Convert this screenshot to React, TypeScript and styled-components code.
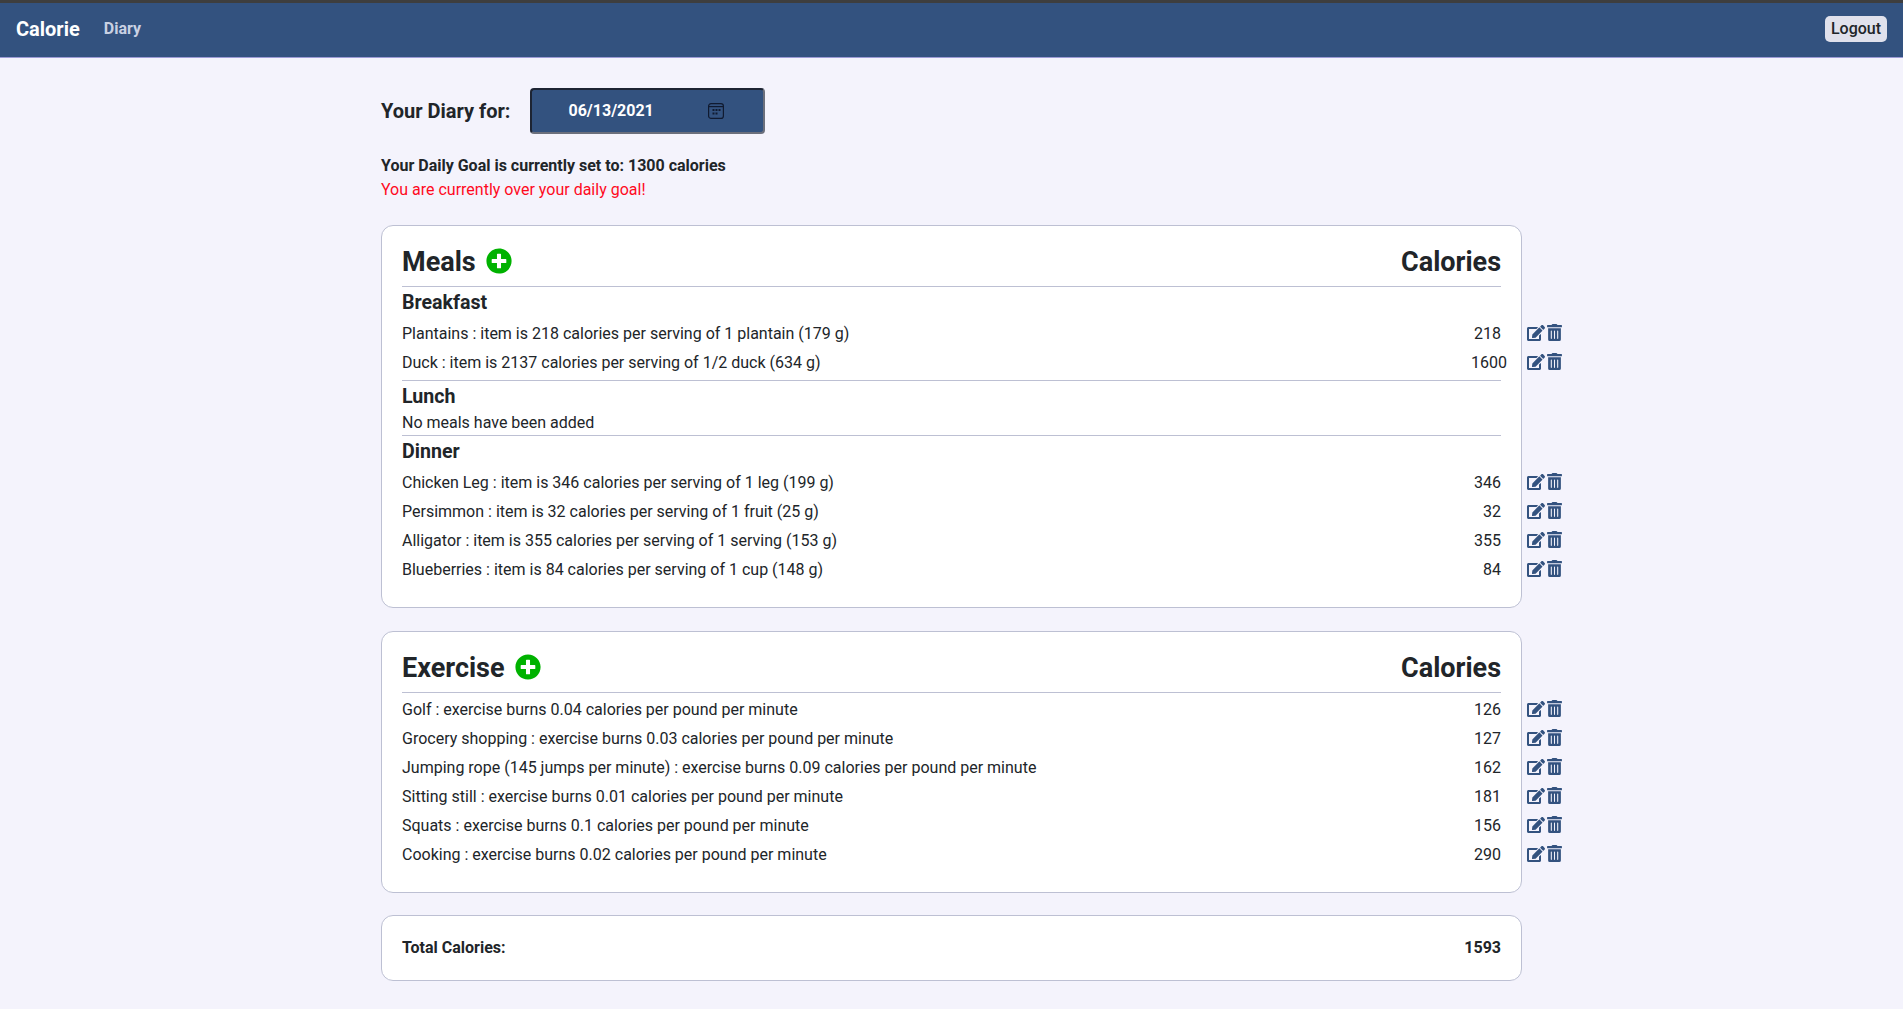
import React from 'react'
import styled, { createGlobalStyle } from 'styled-components'
import { FaPlusCircle, FaEdit, FaTrashAlt } from 'react-icons/fa'

const GlobalStyle = createGlobalStyle`
  * {
    box-sizing: border-box;
  }
  body {
    margin: 0;
    background: #f4f3fc;
    color: #212529;
    font-family: Roboto, "Liberation Sans", sans-serif;
    font-size: 16px;
    line-height: 24px;
  }
`

const Navbar = styled.nav`
  display: flex;
  align-items: center;
  height: 58px;
  padding: 0 16px 3px 16px;
  background: #33527f;
  border-top: 3px solid #3e3e3e;
  border-bottom: 1px solid #9c9bd6;
`

const Brand = styled.span`
  color: #fff;
  font-size: 20px;
  font-weight: 700;
  margin-right: 24px;
`

const NavLink = styled.span`
  color: #c9d1e3;
  font-size: 16px;
  font-weight: 700;
`

const LogoutButton = styled.button`
  margin-left: auto;
  height: 26px;
  padding: 0 6px;
  border: none;
  border-radius: 5px;
  background: #e0e1ec;
  color: #212529;
  font-family: inherit;
  font-size: 16px;
  font-weight: 500;
`

const Main = styled.main`
  width: 1141px;
  margin-left: 381px;
  padding-bottom: 29px;
`

const DiaryHeader = styled.div`
  display: flex;
  align-items: center;
  gap: 20px;
  margin: 30px 0 20px;
`

const DiaryLabel = styled.span`
  font-size: 20px;
  font-weight: 700;
`

const DatePicker = styled.div`
  display: flex;
  align-items: center;
  justify-content: space-between;
  width: 235px;
  height: 46px;
  padding: 0 39px 0 36px;
  background: #33527f;
  border: 2px solid;
  border-color: #1d2433 #6b6f7c #6b6f7c #1d2433;
  border-radius: 4px;
  color: #fff;
  font-weight: 700;
`

const GoalText = styled.div`
  font-weight: 700;
`

const OverText = styled.div`
  color: #ff0a1e;
`

const Card = styled.section`
  position: relative;
  margin-top: 23px;
  padding: 16px 20px 23px;
  background: #fff;
  border: 1px solid #bdc0d3;
  border-radius: 12px;
`

const CardHeader = styled.div`
  display: flex;
  align-items: center;
  justify-content: space-between;
  height: 45px;
  border-bottom: 1px solid #bdc0d3;
  padding-top: 2px;
  padding-bottom: 6px;
`

const CardTitle = styled.h2`
  display: flex;
  align-items: center;
  gap: 10px;
  margin: 0;
  font-size: 27px;
  font-weight: 700;
  line-height: 36px;
`

const AddIcon = styled(FaPlusCircle)`
  color: #00b200;
  font-size: 26px;
  margin-top: -2px;
`

const ColumnTitle = styled.span`
  font-size: 27px;
  font-weight: 700;
  line-height: 36px;
`

const Group = styled.div<{ $gap?: number }>`
  padding-bottom: ${(p) => p.$gap ?? 0}px;
  border-bottom: ${(p) => (p.$gap ? '1px solid #bdc0d3' : 'none')};
`

const GroupTitle = styled.h3`
  margin: 0;
  font-size: 19.6px;
  font-weight: 700;
  line-height: 31px;
`

const Rows = styled.div<{ $pad?: number }>`
  padding-top: ${(p) => p.$pad ?? 0}px;
`

const Row = styled.div`
  position: relative;
  display: flex;
  justify-content: space-between;
  height: 29px;
  line-height: 29px;
`

const Amount = styled.span<{ $wide?: boolean }>`
  margin-right: ${(p) => (p.$wide ? '-6px' : '0')};
`

const Actions = styled.div`
  position: absolute;
  top: -1px;
  left: 1125px;
  display: flex;
  align-items: center;
  gap: 1px;
  height: 29px;
  color: #33527f;
  font-size: 18px;
  & > svg:last-child {
    font-size: 17px;
  }
`

const EmptyText = styled.div`
  height: 21px;
  line-height: 22px;
`

const TotalCard = styled(Card)`
  display: flex;
  align-items: center;
  justify-content: space-between;
  height: 66px;
  margin-top: 22px;
  padding: 0 20px;
  font-size: 16px;
  font-weight: 700;
`

const breakfast = [
  ['Plantains : item is 218 calories per serving of 1 plantain (179 g)', '218'],
  ['Duck : item is 2137 calories per serving of 1/2 duck (634 g)', '1600'],
]

const dinner = [
  ['Chicken Leg : item is 346 calories per serving of 1 leg (199 g)', '346'],
  ['Persimmon : item is 32 calories per serving of 1 fruit (25 g)', '32'],
  ['Alligator : item is 355 calories per serving of 1 serving (153 g)', '355'],
  ['Blueberries : item is 84 calories per serving of 1 cup (148 g)', '84'],
]

const exercise = [
  ['Golf : exercise burns 0.04 calories per pound per minute', '126'],
  ['Grocery shopping : exercise burns 0.03 calories per pound per minute', '127'],
  ['Jumping rope (145 jumps per minute) : exercise burns 0.09 calories per pound per minute', '162'],
  ['Sitting still : exercise burns 0.01 calories per pound per minute', '181'],
  ['Squats : exercise burns 0.1 calories per pound per minute', '156'],
  ['Cooking : exercise burns 0.02 calories per pound per minute', '290'],
]

function EntryRows({ items }: { items: string[][] }) {
  return (
    <>
      {items.map(([label, amount]) => (
        <Row key={label}>
          <span>{label}</span>
          <Amount $wide={amount.length > 3}>{amount}</Amount>
          <Actions>
            <FaEdit />
            <FaTrashAlt />
          </Actions>
        </Row>
      ))}
    </>
  )
}

export default function App() {
  return (
    <>
      <GlobalStyle />
      <Navbar>
        <Brand>Calorie</Brand>
        <NavLink>Diary</NavLink>
        <LogoutButton>Logout</LogoutButton>
      </Navbar>
      <Main>
        <DiaryHeader>
          <DiaryLabel>Your Diary for:</DiaryLabel>
          <DatePicker>
            <span>06/13/2021</span>
            <svg width="16" height="16" viewBox="0 0 16 16" fill="none" stroke="#101a30" strokeWidth="1.2">
              <rect x="0.6" y="0.6" width="14.8" height="14.8" rx="2.5" />
              <path d="M1 3.6h14" />
              <path d="M4.5 7h2M7.5 7h2M10.5 7h2M4.5 10.5h2M7.5 10.5h2" strokeWidth="2" />
            </svg>
          </DatePicker>
        </DiaryHeader>
        <GoalText>Your Daily Goal is currently set to: 1300 calories</GoalText>
        <OverText>You are currently over your daily goal!</OverText>

        <Card>
          <CardHeader>
            <CardTitle>
              Meals <AddIcon />
            </CardTitle>
            <ColumnTitle>Calories</ColumnTitle>
          </CardHeader>
          <Group $gap={3}>
            <GroupTitle>Breakfast</GroupTitle>
            <Rows $pad={1}>
              <EntryRows items={breakfast} />
            </Rows>
          </Group>
          <Group $gap={2}>
            <GroupTitle>Lunch</GroupTitle>
            <EmptyText>No meals have been added</EmptyText>
          </Group>
          <Group>
            <GroupTitle>Dinner</GroupTitle>
            <Rows $pad={1}>
              <EntryRows items={dinner} />
            </Rows>
          </Group>
        </Card>

        <Card>
          <CardHeader>
            <CardTitle>
              Exercise <AddIcon />
            </CardTitle>
            <ColumnTitle>Calories</ColumnTitle>
          </CardHeader>
          <Rows $pad={2}>
            <EntryRows items={exercise} />
          </Rows>
        </Card>

        <TotalCard>
          <span>Total Calories:</span>
          <span>1593</span>
        </TotalCard>
      </Main>
    </>
  )
}
